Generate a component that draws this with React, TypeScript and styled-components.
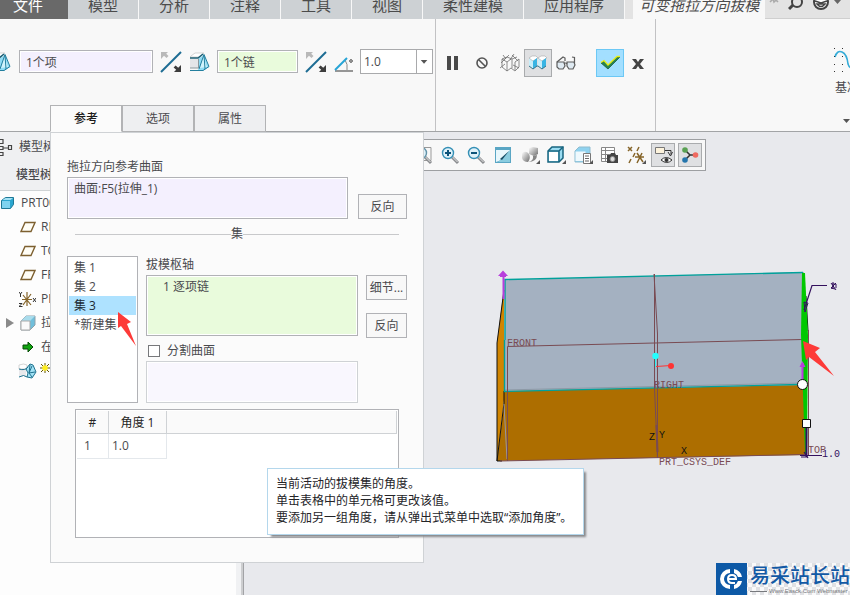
import React, { useState } from "react";
import styled, { createGlobalStyle, css } from "styled-components";

const GlobalStyle = createGlobalStyle`
  * { box-sizing: border-box; }
  body {
    margin: 0;
    color: #4a4a4e;
    background: #e8e9ed;
    font: 12px/18px "Open Sans", "Noto Sans CJK SC", sans-serif;
  }
  button, input, select, textarea { font: inherit; color: inherit; border-radius: 0; }
  button { cursor: pointer; padding: 0; }
  ul { margin: 0; padding: 0; list-style: none; }
`;

const Page = styled.div`
  display: flex;
  flex-direction: column;
  min-height: 100vh;
  position: relative;
  overflow: hidden;
`;

/* ---------- top menu ---------- */

const MenuBar = styled.nav`
  display: flex;
  gap: 1px;
  height: 19px;
  background: #f8f8f8;
  overflow: hidden;
`;

const MenuTab = styled.button<{ $kind?: "file" | "active" }>`
  flex: none;
  height: 19px;
  padding: 0 20px 8px;
  border: 0;
  font-size: 15px;
  line-height: 11px;
  white-space: nowrap;
  color: #4b4b4b;
  background: #cdd1d4;
  ${(p) =>
    p.$kind === "file" &&
    css`
      padding: 0 25px 8px 13px;
      color: #fff;
      background: #696969;
      margin-right: -1px;
    `}
  ${(p) =>
    p.$kind === "active" &&
    css`
      padding: 0 6px 8px;
      margin-left: 8px;
      font-style: italic;
      background: #f8f8f8;
      box-shadow: -8px 0 #e3e3e3;
    `}
`;

const MenuTools = styled.div`
  flex: 1;
  display: flex;
  gap: 3px;
  padding-left: 2px;
  margin-left: -1px;
  background: #e3e3e3;
  border-bottom: 1px solid #cfcfcf;
`;

const MenuTool = styled.button`
  flex: none;
  border: 0;
  background: none;
  height: 18px;
  line-height: 0;
  padding-bottom: 6px;
  svg { display: block; }
`;

/* ---------- ribbon ---------- */

const Ribbon = styled.header`
  display: flex;
  height: 113px;
  background: #f8f8f8;
  border-bottom: 1px solid #a2a4a6;
`;

const RibbonSection = styled.section<{ $width?: number }>`
  display: flex;
  flex-direction: column;
  flex: ${(p) => (p.$width ? `0 0 ${p.$width}px` : "1")};
  padding-top: 30px;
  ${(p) => p.$width && "border-right: 1px solid #c2c2c4;"}
`;

const ToolRow = styled.div<{ $start: number; $gap: number }>`
  display: flex;
  align-items: center;
  height: 28px;
  gap: ${(p) => p.$gap}px;
  margin-left: ${(p) => p.$start}px;
  > svg { flex: none; overflow: visible; }
`;

const FieldRow = styled(ToolRow)`
  height: 25px;
`;

const Field = styled.input<{ $tone: string; $width: number }>`
  width: ${(p) => p.$width}px;
  height: 23px;
  padding: 0 6px;
  border: 1px solid #b1b2b6;
  background: ${(p) => p.$tone};
  box-shadow: inset 0 0 0 1px #fff;
`;

const PlainButton = styled.button`
  flex: none;
  border: 0;
  background: none;
  line-height: 0;
  svg { display: block; overflow: visible; }
`;

const AngleBox = styled.label`
  display: flex;
  position: relative;
  width: 73px;
  height: 25px;
  border: 1px solid #a9aaac;
  background: #fff;
  select {
    flex: 1;
    appearance: none;
    border: 0;
    padding: 0 3px;
    background: none;
  }
  svg {
    position: absolute;
    right: 0;
    top: 0;
    pointer-events: none;
    border-left: 1px solid #a9aaac;
  }
`;

const ToolButton = styled.button<{ $look?: "pressed" | "accept" }>`
  display: flex;
  align-items: center;
  justify-content: center;
  flex: none;
  width: 28px;
  height: 28px;
  border: 1px solid transparent;
  background: none;
  ${(p) => p.$look === "pressed" && "background: #dfe0e2; border-color: #a9abad;"}
  ${(p) => p.$look === "accept" && "background: #a3dfff; border-color: #6cc8f5; margin-left: 16px;"}
`;

const PanelTabs = styled.div`
  display: flex;
  margin: auto 0 -1px 50px;
`;

const PanelTab = styled.button<{ $active: boolean }>`
  width: 72px;
  height: 27px;
  border: 1px solid #b2b3b5;
  background: ${(p) => (p.$active ? "#fbfbfb" : "#eeeff1")};
  ${(p) => p.$active && "border-bottom-color: #fbfbfb; color: #1c1c1c; font-weight: 500;"}
`;

const DatumButton = styled.button`
  align-self: flex-end;
  display: flex;
  flex-direction: column;
  align-items: flex-start;
  width: 30px;
  margin: -5px -14px 0 0;
  border: 0;
  background: none;
  white-space: nowrap;
  svg { display: block; flex: none; overflow: visible; }
  span { margin: 10px 0 24px 1px; line-height: 12px; }
`;

/* ---------- body ---------- */

const Body = styled.main`
  flex: 1;
  display: flex;
  position: relative;
`;

const Sidebar = styled.aside`
  flex: 0 0 244px;
  display: flex;
  flex-direction: column;
  background: #fdfdfd;
  border-right: 1px solid #a2a3a6;
  box-shadow: inset -2px 0 #cdced0, inset -7px 0 #f0f1f3;
`;

const TreeHeader = styled.div`
  padding-top: 6px;
  height: 59px;
  background: #eff0f2;
  border-bottom: 1px solid #cfd3d5;
`;

const TreeTitle = styled.h2`
  display: flex;
  gap: 6px;
  height: 18px;
  margin: 0;
  font-size: 12px;
  line-height: 18px;
  font-weight: 400;
`;

const TreeCaption = styled.h3`
  margin: 10px 0 0 16px;
  font-size: 12px;
  line-height: 18px;
  font-weight: 500;
`;

const TreeItem = styled.li<{ $root?: boolean }>`
  display: flex;
  align-items: center;
  height: 24px;
  gap: ${(p) => (p.$root ? 6 : 4)}px;
  padding-left: ${(p) => (p.$root ? 0 : 4)}px;
  svg { flex: none; }
`;

const Stage = styled.section`
  flex: 1;
  min-width: 0;
  display: grid;
  background: #e8e9ed;
`;

const Scene = styled.svg`
  grid-area: 1 / 1;
  width: 100%;
  height: 100%;
  min-height: 463px;
  display: block;
  font: 10px "Liberation Mono", monospace;
`;

const ViewBar = styled.div`
  grid-area: 1 / 1;
  place-self: start;
  display: flex;
  gap: 3px;
  margin: 7px 0 0 163px;
  padding: 3px;
  height: 32px;
  border: 1px solid #9d9fa2;
  background: #f8f8f8;
`;

const ViewGroup = styled.div`
  display: flex;
  justify-content: space-between;
  width: 237px;
`;

const ViewButton = styled.button<{ $on?: boolean }>`
  width: 24px;
  height: 24px;
  display: flex;
  align-items: center;
  justify-content: center;
  border: 1px solid ${(p) => (p.$on ? "#a9abad" : "transparent")};
  background: ${(p) => (p.$on ? "#dfe0e2" : "none")};
  svg { flex: none; overflow: visible; }
`;

/* ---------- options panel ---------- */

const Panel = styled.section`
  position: absolute;
  left: 50px;
  top: 0;
  width: 44%;
  min-width: 360px;
  padding: 25px 16px 24px;
  border: 1px solid #cfd2d5;
  background: #fbfbfb;
`;

const Caption = styled.label`
  display: block;
  line-height: 18px;
`;

const SurfaceRow = styled.div`
  display: flex;
  align-items: flex-end;
  gap: 10px;
  margin-top: 1px;
`;

const Collector = styled.textarea<{ $tone: string; $height: number; $indent?: number; $faint?: boolean }>`
  display: block;
  flex: 1;
  min-width: 0;
  width: 100%;
  height: ${(p) => p.$height}px;
  padding: 2px 6px;
  padding-left: ${(p) => p.$indent || 6}px;
  resize: none;
  overflow: hidden;
  border: 1px solid ${(p) => (p.$faint ? "#cfd2d5" : "#b1b2b6")};
  background: ${(p) => p.$tone};
  box-shadow: inset 0 0 0 1px #fff;
`;

const PushButton = styled.button<{ $wide?: boolean }>`
  flex: none;
  width: ${(p) => (p.$wide ? "49px" : "100%")};
  height: 25px;
  border: 1px solid #b1b2b6;
  background: #f8f8f8;
`;

const Divider = styled.div`
  display: flex;
  align-items: center;
  margin: 6px 8px 13px;
  &::before, &::after {
    content: "";
    flex: 1;
    height: 1px;
    background: #c8c9cb;
  }
`;

const SetGrid = styled.div`
  display: grid;
  grid-template-columns: 71px 1fr 41px;
  gap: 8px;
  height: 147px;
`;

const SetList = styled.ul`
  position: relative;
  padding: 1px;
  border: 1px solid #b1b2b6;
  background: #fff;
`;

const SetItem = styled.button<{ $on: boolean }>`
  display: block;
  width: 100%;
  height: 19px;
  padding-left: 5px;
  border: 0;
  text-align: left;
  background: ${(p) => (p.$on ? "#aee2ff" : "none")};
  color: ${(p) => (p.$on ? "#1c2a33" : "inherit")};
`;

const Pointer = styled.svg`
  position: absolute;
  left: 49px;
  top: 54px;
  pointer-events: none;
`;

const HingeColumn = styled.div`
  display: flex;
  flex-direction: column;
  justify-content: space-between;
`;

const Hinge = styled.div`
  display: grid;
  gap: 1px;
`;

const CheckRow = styled.label`
  display: flex;
  align-items: center;
  gap: 7px;
  padding-left: 2px;
  margin: 4px 0 -1px;
  input {
    appearance: none;
    width: 12px;
    height: 12px;
    margin: 0;
    border: 1px solid #77787b;
    background: #fff;
  }
  input:checked { background: #2d8fc4; }
`;

const ButtonColumn = styled.div`
  display: flex;
  flex-direction: column;
  gap: 13px;
  padding-top: 19px;
`;

const TableFrame = styled.div`
  height: 129px;
  margin: 6px 8px 0;
  padding: 1px;
  border: 1px solid #b1b2b6;
  background: #fff;
`;

const AngleTable = styled.table`
  width: 100%;
  border-spacing: 0;
  table-layout: fixed;
  th, td { padding: 0; font-weight: 400; }
  th {
    height: 23px;
    padding-top: 2px;
    color: #242424;
    background: #fafafa;
    border-right: 1px solid #cfd2d5;
    border-bottom: 1px solid #cfd2d5;
  }
  td {
    height: 25px;
    border-right: 1px solid #e4e8ec;
    border-bottom: 1px solid #e4e8ec;
  }
  td:first-child { padding-left: 7px; }
  td:nth-child(2) { padding-left: 3px; }
  td:last-child { border: 0; }
  th:nth-child(1) { width: 32px; }
  th:nth-child(2) { width: 58px; }
`;

const Tooltip = styled.div`
  position: absolute;
  left: 267px;
  top: 336px;
  padding: 6px 11px 8px 8px;
  border: 1px solid #b4d7ec;
  background: #fff;
  color: #242428;
  line-height: 17px;
  white-space: nowrap;
  box-shadow: 3px 3px 2px -1px #88898c;
  p { margin: 0; }
`;

const Watermark = styled.div`
  position: absolute;
  right: 0;
  bottom: 0;
  display: flex;
  gap: 2px;
  height: 32px;
  background: repeating-conic-gradient(#f9f9fa 0 25%, #dfe0e3 0 50%) 0 0 / 8px 8px;
  color: #1259a5;
  white-space: nowrap;
  svg { display: block; }
`;

const WatermarkText = styled.div`
  width: 100px;
  font-size: 20px;
  line-height: 25px;
  font-weight: 500;
  small {
    display: flex;
    align-items: center;
    gap: 2px;
    font: 6px/6px "Liberation Sans", sans-serif;
    color: #77797d;
  }
  small::before {
    content: "";
    width: 17px;
    height: 1px;
    background: #77797d;
  }
`;

/* ---------- icons ---------- */

const SwapIcon = () => (
  <svg width="20" height="20" viewBox="0 0 20 20">
    <path d="M0 0h7L5.200 1.800 7.500 4 5.500 6 3 3.800 0 7z" fill="#b9b9b9" />
    <path d="M0 20L20 0" stroke="#1d6c93" strokeWidth="2" />
    <path d="M20 20h-7l2.200-2.200-2.600-2.400 2-2 2.600 2.400L20 13z" fill="#3d3d3d" />
  </svg>
);

const DraftIcon = ({ axis }: { axis?: boolean }) => (
  <svg width={axis ? 18 : 20} height="20" viewBox={axis ? "3 0 18 20" : "0 0 20 20"}>
    <path d="M2 4l4-3h9l-4 4H1z" fill="#fff" stroke="#c4c4c4" strokeWidth=".7" />
    <path d="M1 7h8v9H1z" fill="#e4e5e8" />
    <path d="M9 7l6-4 5 12-6 4H8l2-3z" fill="#8fdcf5" />
    <path d="M14 4l4 11-7 1z" fill="#d0f3fc" />
    <path d="M1 6h8l5-4" fill="none" stroke="#1b5d73" strokeWidth="1.500" />
    <path d="M9.500 7v9H1" fill="none" stroke="#8a979c" />
    <path d="M1 18.500h13l6-4-5-12-5 14.500M15 3l1 14" fill="none" stroke="#247f9e" />
    {axis && <path d="M5.500 1v18M3 4l2.500-3L8 4z" stroke="#333" fill="#333" />}
  </svg>
);

const CurvedDraftIcon = () => (
  <svg width="19" height="16" viewBox="0 0 19 16">
    <path d="M1 2q5-2 8 0v4H1z" fill="#fff" stroke="#c4c4c4" strokeWidth=".7" />
    <path d="M1 7h7v6H1z" fill="#e8e9ec" />
    <path d="M8 6l4-5 3 1 3 7-4 6-5-1 1-4z" fill="#a2e3f6" stroke="#1f718e" />
    <path d="M1 6q6 2 9-2M1 14q5-3 8 0M12 2l-1 8 6-1M14 3l-3 7 3 4" fill="none" stroke="#1f718e" />
  </svg>
);

const AngleIcon = () => (
  <svg width="18" height="20" viewBox="0 0 18 20">
    <path d="M1 19h18" stroke="#969696" strokeWidth="2" />
    <path d="M11 8q3 4 2 10" stroke="#888" fill="none" />
    <path d="M1 18L13 6" stroke="#27a4d6" strokeWidth="2" />
    <circle cx="17" cy="9" r="1.300" fill="none" stroke="#444" />
  </svg>
);

const Glasses = () => (
  <svg width="20" height="16" viewBox="0 0 20 16">
    <g fill="#dfeaf2" stroke="#5c5c5c" strokeWidth="1.200">
      <path d="M1 7h7l1 4-2 3H3l-2-2zM11 7h7l1 3-2 4h-4l-2-3z" />
      <path d="M8 9q1.500-2 3 0M1 7l6-5 2 1v3M18.500 8V2.500L16 2" fill="none" />
    </g>
  </svg>
);

const Magnifier = ({ sign }: { sign?: "plus" | "minus" | "fit" }) => (
  <svg width="18" height="18" viewBox="0 0 18 18">
    {sign === "fit" && <path d="M1 1.500h16v13H1z" fill="none" stroke="#999" />}
    <path d="M11 11l6 6" stroke="#8b8d90" strokeWidth="3" />
    <path d="M11.500 11l5 5" stroke="#e6e6e6" />
    <circle cx="7" cy="7" r="5.500" fill="#dff1f9" stroke={sign === "fit" ? "#6292a8" : "#348fb5"} strokeWidth="1.400" />
    {sign !== "fit" && <path d="M4 7h6" stroke="#0c5379" strokeWidth="2" />}
    {sign === "plus" && <path d="M7 4v6" stroke="#0c5379" strokeWidth="2" />}
  </svg>
);

const Corner = () => <path d="M19 14v4h-4z" fill="#555" />;

const ShadeIcon = () => (
  <svg width="18" height="18" viewBox="0 0 18 18">
    <defs>
      <linearGradient id="shade" x1="0" y1="0" x2="1" y2="1">
        <stop offset="0" stopColor="#fff" />
        <stop offset="1" stopColor="#6d6d6d" />
      </linearGradient>
    </defs>
    <path d="M1 7q4-3 7 1 2 4-1 8-5 0-6-4z" fill="url(#shade)" />
    <path d="M8 2l4-1 5 1v6l-4 2-5-2z" fill="url(#shade)" />
    <path d="M7 16q6-1 5-6l4-1q0 7-9 7z" fill="#858585" />
    <Corner />
  </svg>
);

const SavedViewIcon = () => (
  <svg width="18" height="18" viewBox="0 0 18 18">
    <path d="M1 5l4-4h11v11l-3 4H1z" fill="#8fd2ef" stroke="#8fbccf" />
    <path d="M1.500 5.500h10V15h-10z" fill="#eff9fd" />
    <path d="M9.500 7.500h7v10h-7z" fill="#fff" stroke="#777" />
    <path d="M11 10h4M11 12.500h4M11 15h4" stroke="#666" />
    <Corner />
  </svg>
);

const ViewManagerIcon = () => (
  <svg width="18" height="18" viewBox="0 0 18 18">
    <path d="M1.500 1.500h13v14h-13z" fill="#fff" stroke="#888" />
    <path d="M1 4.500h14M1 8.500h14M1 12.500h14M5.500 1v15" stroke="#888" />
    <path d="M7 9h3l1-2h4l1 2h2v8H7z" fill="#444" />
    <circle cx="12.500" cy="13" r="2.500" fill="#ddd" stroke="#888" />
  </svg>
);

const DatumFilterIcon = () => (
  <svg width="18" height="18" viewBox="0 0 18 18">
    <g stroke="#86652a" strokeWidth="1.500" fill="none">
      <path d="M1 1l4 4M5 1L1 5M12 1l-2 4M8 7l-2 4M4 13l-2 4" />
      <path d="M10 7l6 9M15 7l-5 10M8 11h9" />
    </g>
    <Corner />
  </svg>
);

const AnnotationIcon = () => (
  <svg width="18" height="18" viewBox="0 0 18 18">
    <path d="M1.500 1.500h9v6h-9z" fill="#fdf3dc" stroke="#777" />
    <path d="M11 4.500h6v4M14 6l2.500 4 2-4" stroke="#333" fill="none" />
    <path d="M7 14q5-5 11 0-5 5-11 0z" fill="#fff" stroke="#333" />
    <circle cx="12.500" cy="14" r="2" fill="#333" />
  </svg>
);

const SpinIcon = () => (
  <svg width="18" height="18" viewBox="0 0 18 18">
    <path d="M4 4l5 5-5 5M9 9h6" stroke="#333" strokeWidth="1.500" fill="none" />
    <circle cx="4" cy="4" r="2.800" fill="#59a052" />
    <circle cx="4" cy="14" r="2.800" fill="#2475ac" />
    <circle cx="14.500" cy="9" r="2.800" fill="#ef6a60" />
  </svg>
);

const PartIcon = () => (
  <svg width="15" height="14" viewBox="0 0 15 14">
    <path d="M1.500 4.500l4-3h8v7l-3 4h-9z" fill="#2ba6cf" stroke="#1f7896" strokeLinejoin="round" />
    <path d="M2.500 4l3-2h7.500l-2.500 2z" fill="#a4e2f5" />
    <path d="M2 5h8v7H2z" fill="#7fd3ef" />
  </svg>
);

const PlaneIcon = () => (
  <svg width="16" height="12" viewBox="0 0 16 12">
    <path d="M5 1.500h10L11 10.500H1z" fill="#fffdf5" stroke="#7d6030" strokeWidth="1.400" />
  </svg>
);

const CsysIcon = () => (
  <svg width="17" height="17" viewBox="0 0 17 17">
    <path d="M4 14L12 3M4 4l8 10M8 1v14M3 8.500h10" stroke="#86652a" strokeWidth="1.200" />
    <path d="M0 1l1.500 2L3 1M1.500 3v3M0 12.500h3l-3 3h3.500M14 7l3 4M17 7l-3 4" stroke="#333" fill="none" />
  </svg>
);

const ExtrudeIcon = () => (
  <svg width="16" height="16" viewBox="0 0 16 16">
    <path d="M1 6l5-5h9v9l-5 5H1z" fill="#70bfdb" stroke="#8fa1aa" />
    <path d="M1 6l5-5h9l-5 5z" fill="#a9dcec" />
    <path d="M1 6h9v9H1z" fill="#fafafa" stroke="#aaa" />
  </svg>
);

const InsertIcon = () => (
  <svg width="12" height="12" viewBox="0 0 12 12">
    <path d="M1 4h5V1l5 5-5 5V8H1z" fill="#10a410" stroke="#064a06" />
  </svg>
);

const Expander = styled.span<{ $shown?: boolean }>`
  flex: none;
  width: 10px;
  height: 10px;
  background: ${(p) => (p.$shown ? "#8a8a8a" : "transparent")};
  clip-path: polygon(20% 0, 100% 50%, 20% 100%);
`;

const IconSlot = styled.span`
  flex: none;
  display: flex;
  align-items: center;
  justify-content: center;
  width: 19px;
  height: 20px;
`;

const StarSlot = styled.span`
  display: flex;
  margin-left: -1px;
`;

const treeRows: { icon: React.ReactNode; text: string; opens?: boolean }[] = [
  { icon: <PlaneIcon />, text: "RIGHT" },
  { icon: <PlaneIcon />, text: "TOP" },
  { icon: <PlaneIcon />, text: "FRONT" },
  { icon: <CsysIcon />, text: "PRT_CSYS_DEF" },
  { icon: <ExtrudeIcon />, text: "拉伸 1", opens: true },
  { icon: <InsertIcon />, text: "在此插入" },
];

const SceneDrawing = () => (
  <Scene viewBox="244 132 606 463" preserveAspectRatio="xMinYMin meet" role="img" aria-label="模型视图">
    <path d="M504 288L497 343V461L504 400z" fill="#d18500" />
    <path d="M505 280L804 272V385L504 391z" fill="#a4b1c1" />
    <path d="M504 391L803 385 807 455 497 461 504 404z" fill="#ad6e00" />
    <path d="M504 290L497 343V461h5M504 391v12L497 461" fill="none" stroke="#111" />
    <path d="M504 404l3 55" stroke="#99969e" />
    <path d="M504 390L802 383" stroke="#8d99a6" />
    <path d="M505 340V279.500L803 272.500M504.500 340V391.500L800 384.500" fill="none" stroke="#00a19b" strokeWidth="1.400" />
    <path d="M507.500 461V346.500L802 339.500M500 461L806 454.500" fill="none" stroke="#794b53" />
    <path d="M654.500 274V388l3 70M654 274l3.500 60V458" fill="none" stroke="#794b53" />
    <path d="M656.500 425l1 27" stroke="#794b53" strokeWidth="2" />
    <path d="M806 296l2 35" stroke="#111" fill="none" />
    <path d="M808.500 330V455" stroke="#794b53" />
    <path d="M802 273h3l3 62-1 119h-2l-4-119z" fill="#00c800" />
    <path d="M806.500 427V457" stroke="#33105d" strokeWidth="2" />
    <path d="M800 455.500H822M804 452l4 6M801 457h6" stroke="#33105d" strokeWidth="1.200" />
    <path d="M827 285.500H812L806 304l-2 6" fill="none" stroke="#33105d" strokeWidth="1.200" />
    <path d="M804 302l1 10 3-9zM831 283l5 7M831 288l5-5M832 284h4v4M833 282v6h-2l4 1" stroke="#33105d" fill="none" />
    <path d="M503.500 275V299M802.500 363V380" stroke="#b83fdc" strokeWidth="2" />
    <path d="M503 270.500l5 5.500h-2v1h-6v-1h-2zM802.500 361l3 6h-6z" fill="#b83fdc" />
    <path d="M655.500 357v10" stroke="#2cf2f2" />
    <path d="M656 366.500l15-1" stroke="#f33" />
    <circle cx="655.500" cy="356" r="3.200" fill="#2ff" />
    <circle cx="671" cy="366" r="3" fill="#f33" />
    <circle cx="802.500" cy="384.500" r="5" fill="#fff" stroke="#111" />
    <path d="M802.500 419.500h8v8h-8z" fill="#fff" stroke="#111" />
    <g fill="#794b53">
      <text x="507" y="346">FRONT</text>
      <text x="654" y="388">RIGHT</text>
      <text x="659" y="465">PRT_CSYS_DEF</text>
      <text x="808" y="453">TOP</text>
    </g>
    <g fill="#111">
      <text x="649" y="440">Z</text>
      <text x="659" y="438">Y</text>
      <text x="681" y="454">X</text>
    </g>
    <text x="822" y="457" fill="#33105d">1.0</text>
    <path d="M803 341l17 7-5 4 19 24-25-19-3 3z" fill="#fd3a38" />
  </Scene>
);

export default function App() {
  const [tab, setTab] = useState("参考");
  const [activeSet, setActiveSet] = useState("集 3");

  return (
    <Page>
      <GlobalStyle />
      <MenuBar>
        <MenuTab $kind="file">文件</MenuTab>
        {["模型", "分析", "注释", "工具", "视图", "柔性建模", "应用程序"].map((name) => (
          <MenuTab key={name}>{name}</MenuTab>
        ))}
        <MenuTab $kind="active">可变拖拉方向拔模</MenuTab>
        <MenuTools>
          <MenuTool aria-label="折叠">
            <svg width="18" height="12" viewBox="0 0 18 12"><path d="M3 2l3-3 1 3 2-2 2 2" stroke="#aaa" strokeWidth="1.500" fill="none" /></svg>
          </MenuTool>
          <MenuTool aria-label="搜索">
            <svg width="20" height="12" viewBox="0 0 20 12"><circle cx="9" cy="2" r="5" fill="none" stroke="#444" strokeWidth="2" /><path d="M5 5L1 9" stroke="#444" strokeWidth="3" /></svg>
          </MenuTool>
          <MenuTool aria-label="帮助">
            <svg width="20" height="12" viewBox="0 0 20 12"><circle cx="10" cy="2" r="7" fill="#fff" stroke="#444" strokeWidth="2" /><path d="M4 1l6 2 6-2M6 4q4 5 8 0z" stroke="#444" strokeWidth="1.500" fill="none" /></svg>
          </MenuTool>
          <MenuTool aria-label="更多">
            <svg width="8" height="12" viewBox="0 0 8 12"><path d="M0 0h7L3.500 4z" fill="#666" /></svg>
          </MenuTool>
        </MenuTools>
      </MenuBar>

      <Ribbon>
        <RibbonSection $width={436}>
          <FieldRow $start={-7} $gap={8}>
            <DraftIcon axis />
            <Field aria-label="拖拉方向参考" $tone="#f4f0fe" $width={134} defaultValue="1个项" />
            <PlainButton aria-label="反转拖拉方向"><SwapIcon /></PlainButton>
            <DraftIcon />
            <Field aria-label="拔模枢轴" $tone="#e9fbdc" $width={81} defaultValue="1个链" />
            <PlainButton aria-label="反转角度"><SwapIcon /></PlainButton>
            <AngleIcon />
            <AngleBox>
              <select aria-label="角度" defaultValue="1.0"><option>1.0</option></select>
              <svg width="16" height="23" viewBox="0 0 16 23"><path d="M4 10h7L7.500 14z" fill="#555" /></svg>
            </AngleBox>
          </FieldRow>
          <PanelTabs role="tablist">
            {["参考", "选项", "属性"].map((name) => (
              <PanelTab key={name} role="tab" aria-selected={tab === name} $active={tab === name} onClick={() => setTab(name)}>
                {name}
              </PanelTab>
            ))}
          </PanelTabs>
        </RibbonSection>
        <RibbonSection $width={220}>
          <ToolRow $start={4} $gap={0}>
            <ToolButton aria-label="暂停">
              <svg width="14" height="14" viewBox="0 0 14 14"><path d="M0 0h4v14H0zM7 0h4v14H7z" fill="#494949" /></svg>
            </ToolButton>
            <ToolButton aria-label="无预览">
              <svg width="14" height="14" viewBox="0 0 14 14"><circle cx="7" cy="7" r="5" fill="none" stroke="#555" strokeWidth="1.600" /><path d="M3.500 3.500l7 7" stroke="#555" strokeWidth="1.600" /></svg>
            </ToolButton>
            <ToolButton aria-label="分离预览">
              <svg width="20" height="18" viewBox="0 0 20 18">
                <path d="M2 5l5-2 5 2 5-2M2 5v8l5 4 4-3 4 3 4-4V5M7 8v9M2 5l5 3 4-3M12 5v9M15 8l4-3M15 8v8M9 1L1 9M12 1l6 6M14 0l-4 6M3 1l3 4M0 14l5-4M13 11l6 3" fill="none" stroke="#6e6e6e" strokeWidth=".8" />
              </svg>
            </ToolButton>
            <ToolButton aria-label="连接预览" $look="pressed">
              <svg width="20" height="16" viewBox="0 0 20 16">
                <path d="M1 3h8v8l-4 3-4-3zM10 3h8v8l-4 3-4-3z" fill="#c9eefa" />
                <path d="M1 3l3-2h4l2 2-5 3zM10 3l3-2h4l2 2-5 3z" fill="#fff" stroke="#999" strokeWidth=".5" />
                <path d="M5 6l4-3v8l-4 3zM14 6l4-3v8l-4 3z" fill="#38b4e3" />
                <path d="M1 11l4 3 4-3 1 0 4 3 4-3" fill="none" stroke="#3c7388" />
              </svg>
            </ToolButton>
            <ToolButton aria-label="检验"><Glasses /></ToolButton>
            <ToolButton aria-label="确定" $look="accept">
              <svg width="20" height="16" viewBox="0 0 20 16">
                <path d="M1 8l3-2 4 4L17 2h3L8 14z" fill="#278450" stroke="#155335" strokeWidth=".7" />
                <path d="M1 7.500l3-2 4 4.500 9-8.500h3" fill="none" stroke="#e8ee15" strokeWidth="1.300" />
              </svg>
            </ToolButton>
            <ToolButton aria-label="取消">
              <svg width="12" height="12" viewBox="0 0 12 12"><path d="M0 2h4l2 3 2-3h4L8 7l4 5H8L6 9l-2 3H0l4-5z" fill="#444" /></svg>
            </ToolButton>
          </ToolRow>
        </RibbonSection>
        <RibbonSection>
          <DatumButton>
            <svg width="30" height="28" viewBox="0 0 30 28">
              <path d="M1 13Q3 6 8 8t6 12q2 6 6 2" fill="none" stroke="#36acd8" strokeWidth="1.600" />
              <path d="M0 4h1v1H0zM8 4h1v1H8zM16 4h1v1h-1zM0 12h1v1H0zM8 12h1v1H8zM0 20h1v1H0zM8 20h1v1H8zM0 28h1v-1H0zM8 28h1v-1H8z" fill="#333" />
            </svg>
            <span>基准</span>
            <svg width="24" height="6" viewBox="0 0 24 6"><path d="M9 1h7l-3.500 4z" fill="#555" /></svg>
          </DatumButton>
        </RibbonSection>
      </Ribbon>

      <Body>
        <Sidebar>
          <TreeHeader>
            <TreeTitle>
              <svg width="13" height="20" viewBox="0 0 13 20">
                <path d="M-3 1.500h6v4h-6M-3 8.500h6v3h-6M-3 14.500h6v3h-6M3 10h5M8.500 7.500h3v4h-3zM-1 6v10" fill="none" stroke="#444" strokeWidth="1.200" />
              </svg>
              模型树
            </TreeTitle>
            <TreeCaption>模型树</TreeCaption>
          </TreeHeader>
          <ul>
            <TreeItem $root><PartIcon />PRT0001.PRT</TreeItem>
            {treeRows.map((row) => (
              <TreeItem key={row.text}>
                <Expander $shown={row.opens} />
                <IconSlot>{row.icon}</IconSlot>
                {row.text}
              </TreeItem>
            ))}
            <TreeItem>
              <Expander />
              <IconSlot><CurvedDraftIcon /></IconSlot>
              <StarSlot>
                <svg width="10" height="16" viewBox="0 0 10 16"><path d="M0 5h10M5 0v10M1 1l8 8M9 1L1 9" stroke="#665800" /><circle cx="5" cy="5" r="2.800" fill="#ffee20" /></svg>
              </StarSlot>
            </TreeItem>
          </ul>
        </Sidebar>

        <Stage>
          <SceneDrawing />
          <ViewBar>
            <ViewGroup>
              <ViewButton aria-label="重新调整"><Magnifier sign="fit" /></ViewButton>
              <ViewButton aria-label="放大"><Magnifier sign="plus" /></ViewButton>
              <ViewButton aria-label="缩小"><Magnifier sign="minus" /></ViewButton>
              <ViewButton aria-label="重画">
                <svg width="16" height="16" viewBox="0 0 16 16"><path d="M0 0h16v16H0z" fill="#5aa6c4" /><path d="M1 3h14Q13 12 1 15z" fill="#e8f7fc" /><path d="M3 15L15 3v12z" fill="#8accdf" /><path d="M5 12l9-8-7 9z" fill="#184f67" /></svg>
              </ViewButton>
              <ViewButton aria-label="渲染"><ShadeIcon /></ViewButton>
              <ViewButton aria-label="显示样式">
                <svg width="18" height="18" viewBox="0 0 18 18">
                  <path d="M1 5l4-4h11v11l-4 4H1z" fill="#9adcf2" stroke="#17647f" strokeWidth="1.500" />
                  <path d="M1 5h11v11M12 5l4-4" fill="none" stroke="#17647f" strokeWidth="1.500" />
                  <path d="M2 6h9v9H2z" fill="#fff" />
                  <Corner />
                </svg>
              </ViewButton>
              <ViewButton aria-label="已保存方向"><SavedViewIcon /></ViewButton>
              <ViewButton aria-label="视图管理器"><ViewManagerIcon /></ViewButton>
              <ViewButton aria-label="基准显示过滤器"><DatumFilterIcon /></ViewButton>
            </ViewGroup>
            <ViewButton $on aria-label="注释显示"><AnnotationIcon /></ViewButton>
            <ViewButton $on aria-label="旋转中心"><SpinIcon /></ViewButton>
          </ViewBar>
        </Stage>

        <Panel role="tabpanel">
          <Caption htmlFor="pull-surface">拖拉方向参考曲面</Caption>
          <SurfaceRow>
            <Collector id="pull-surface" $tone="#f4f0fe" $height={42} readOnly value="曲面:F5(拉伸_1)" />
            <PushButton $wide>反向</PushButton>
          </SurfaceRow>
          <Divider>集</Divider>
          <SetGrid>
            <SetList>
              {["集 1", "集 2", "集 3", "*新建集"].map((name) => (
                <li key={name}>
                  <SetItem $on={activeSet === name} onClick={() => setActiveSet(name)}>{name}</SetItem>
                </li>
              ))}
              <Pointer width="20" height="36" viewBox="0 0 20 36">
                <path d="M1 1l13 10-4 2 9 22L4 15l-3 2z" fill="#fd3a38" />
              </Pointer>
            </SetList>
            <HingeColumn>
              <Hinge>
                <Caption htmlFor="hinge">拔模枢轴</Caption>
                <Collector id="hinge" $tone="#e9fbdc" $height={61} $indent={16} readOnly value="1 逐项链" />
              </Hinge>
              <CheckRow><input type="checkbox" />分割曲面</CheckRow>
              <div>
                <Collector aria-label="分割对象" $tone="#f9f7fe" $height={42} $faint readOnly value="" />
              </div>
            </HingeColumn>
            <ButtonColumn>
              <PushButton>细节...</PushButton>
              <PushButton>反向</PushButton>
            </ButtonColumn>
          </SetGrid>
          <TableFrame>
            <AngleTable>
              <thead>
                <tr><th>#</th><th>角度 1</th><th /></tr>
              </thead>
              <tbody>
                <tr><td>1</td><td>1.0</td><td /></tr>
              </tbody>
            </AngleTable>
          </TableFrame>
        </Panel>

        <Tooltip role="tooltip">
          <p>当前活动的拔模集的角度。</p>
          <p>单击表格中的单元格可更改该值。</p>
          <p>要添加另一组角度，请从弹出式菜单中选取“添加角度”。</p>
        </Tooltip>

        <Watermark>
          <svg width="32" height="32" viewBox="0 0 32 32">
            <path d="M0 0h31v32H0z" fill="#0d59a6" />
            <path d="M14 6a10 10 0 0 0 0 20v-4a6 6 0 0 1 0-12zM18 6a10 10 0 0 1 8 8h-4a6 6 0 0 0-4-4zM18 26a10 10 0 0 0 8-8h-4a6 6 0 0 1-4 4z" fill="#fff" />
            <path d="M12 16h8q0-4-4-4t-4 4 4 4h3" fill="none" stroke="#fff" strokeWidth="2" />
          </svg>
          <WatermarkText>
            易采站长站
            <small>Www.Easck.Com Webmaster</small>
          </WatermarkText>
        </Watermark>
      </Body>
    </Page>
  );
}
